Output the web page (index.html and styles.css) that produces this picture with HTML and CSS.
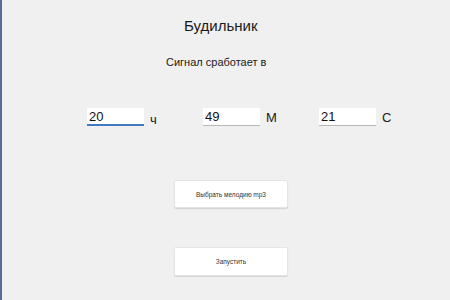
FILE: index.html
```html
<!DOCTYPE html>
<html lang="ru">
<head>
<meta charset="utf-8">
<link rel="stylesheet" href="styles.css">
</head>
<body>
<div class="window">
  <h1 class="title">Будильник</h1>
  <p class="subtitle">Сигнал сработает в</p>
  <div class="time-row">
    <div class="field"><input class="num focused" type="text" value="20"><span class="unit unit-h">ч</span></div>
    <div class="field"><input class="num" type="text" value="49"><span class="unit">М</span></div>
    <div class="field"><input class="num" type="text" value="21"><span class="unit">С</span></div>
  </div>
  <button class="btn btn-melody">Выбрать мелодию mp3</button>
  <button class="btn btn-start">Запустить</button>
</div>
</body>
</html>
```
FILE: styles.css
```css
html, body {
  margin: 0;
  padding: 0;
  width: 450px;
  height: 300px;
  overflow: hidden;
  background: #f0f0f0;
}
.window {
  box-sizing: border-box;
  width: 450px;
  height: 300px;
  border-left: 2px solid #5b6a9e;
  display: flex;
  flex-direction: column;
  align-items: flex-start;
  font-family: "Liberation Sans", Arial, sans-serif;
  color: #1a1a1a;
}
.title {
  margin: 16px 0 0 182px;
  font-size: 15px;
  line-height: 20px;
  font-weight: normal;
}
.subtitle {
  margin: 19px 0 0 164px;
  font-size: 11px;
  line-height: 15px;
}
.time-row {
  margin: 38px 0 0 85px;
  display: flex;
}
.field {
  display: flex;
  align-items: flex-end;
  width: 116px;
}
.num {
  box-sizing: border-box;
  width: 57px;
  height: 18px;
  border: none;
  border-bottom: 1px solid #b8b8b8;
  background: #fff;
  padding: 0 0 0 2px;
  margin: 0;
  font-family: "Liberation Sans", Arial, sans-serif;
  font-size: 13px;
  color: #111;
  outline: none;
}
.num.focused {
  border-bottom: 2px solid #3d7cc2;
}
.unit {
  margin-left: 6px;
  font-size: 13px;
  line-height: 16px;
  color: #1a1a1a;
}
.unit-h {
  position: relative;
  top: 2px;
}
.btn {
  box-sizing: border-box;
  width: 114px;
  height: 28px;
  margin-left: 172px;
  background: #fff;
  border: 1px solid #e4e4e4;
  border-radius: 2px;
  box-shadow: 0 1px 1px rgba(0,0,0,0.12);
  font-family: "Liberation Sans", Arial, sans-serif;
  font-size: 6.5px;
  color: #333;
  padding: 0;
}
.btn-melody {
  margin-top: 54px;
}
.btn-start {
  margin-top: 39px;
  height: 29px;
}
```
